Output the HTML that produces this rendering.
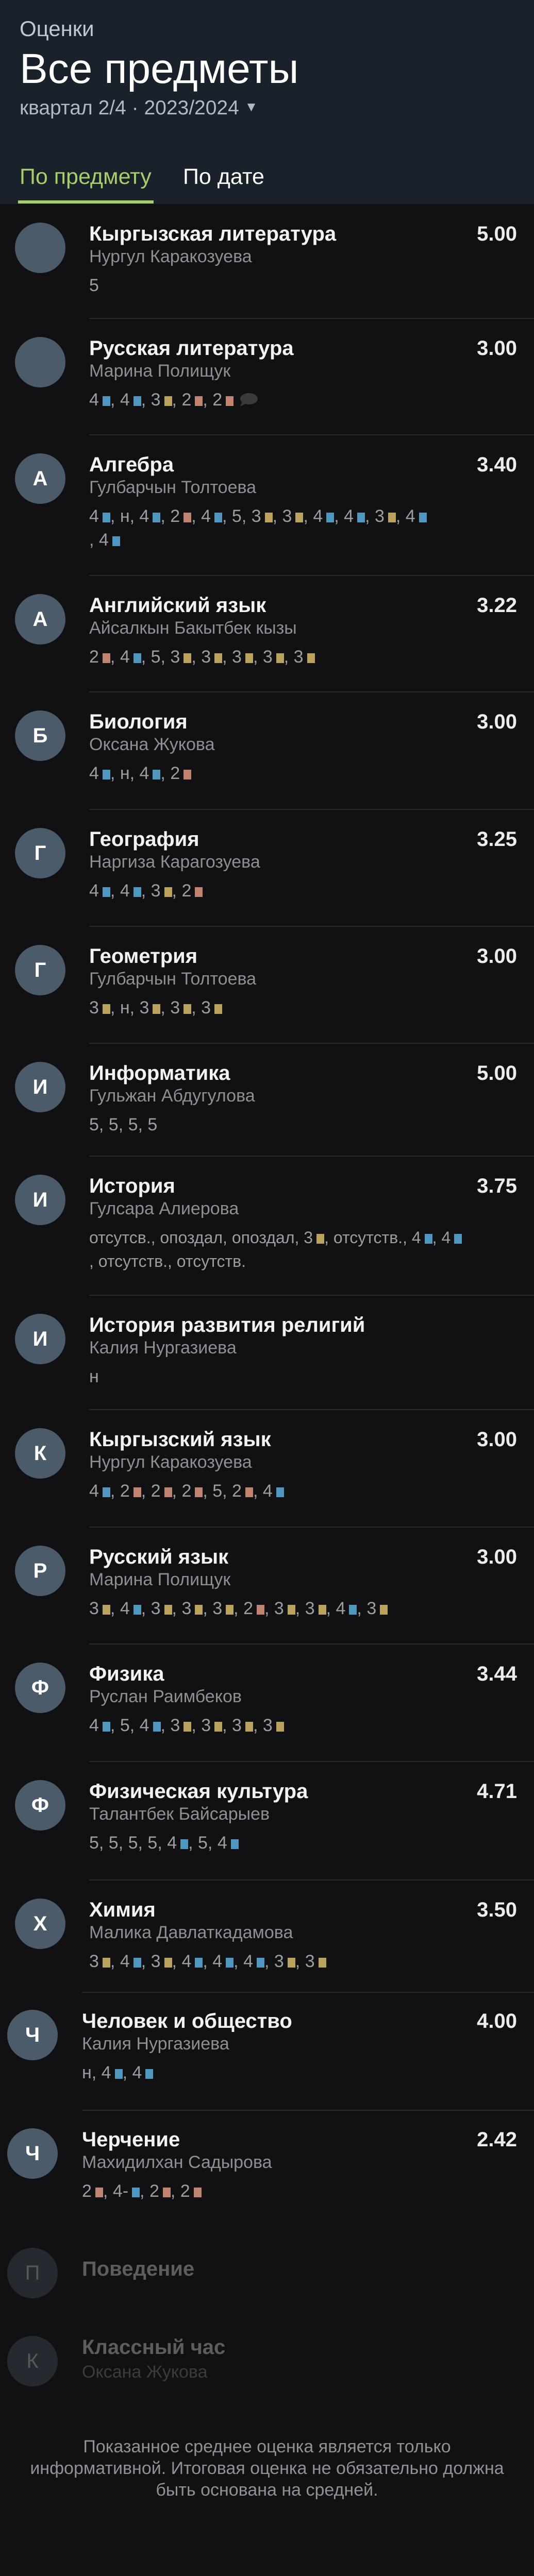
<!DOCTYPE html>
<html style="width:1036px;height:5120px;overflow:hidden"><head><meta charset="utf-8">
<style>
*{margin:0;padding:0;box-sizing:border-box}
body{width:1036px;height:5120px;background:#111113;font-family:"Liberation Sans",Arial,sans-serif;position:relative;overflow:hidden}
.hdr{position:absolute;left:0;top:0;width:1036px;height:396px;background:#19212b}
.abs{position:absolute;white-space:nowrap;line-height:1}
.row{position:absolute;left:0;width:1036px;height:0}
.av{position:absolute;width:98px;height:98px;border-radius:50%;background:#4b5b69;color:#fff;font-weight:bold;font-size:40px;text-align:center;line-height:98px}
.t{position:absolute;font-size:40px;font-weight:bold;color:#f2f2f2;line-height:1;white-space:nowrap}
.s{position:absolute;right:33px;font-size:40px;font-weight:bold;color:#ececec;line-height:1}
.tc{position:absolute;font-size:34px;color:#8c9095;line-height:1;white-space:nowrap}
.g{position:absolute;font-size:34px;color:#9a9ea3;line-height:46px;white-space:nowrap}
.g i{display:inline-block;width:15px;height:19px;margin-left:7px;vertical-align:-1px}
.b{background:#4f97bf}.y{background:#b9a25d}.r{background:#c08470}
.sep{position:absolute;right:0;height:2px;background:#29292c}
</style></head><body>
<div class="hdr"></div>
<div class="abs" style="left:38px;top:35px;font-size:42px;color:#c3c8ce">Оценки</div>
<div class="abs" style="left:38px;top:93px;font-size:82px;color:#fff">Все предметы</div>
<div class="abs" style="left:38px;top:190px;font-size:39px;color:#b3b9c1">квартал 2/4 · 2023/2024 <span style="font-size:26px;vertical-align:6px">▼</span></div>
<div class="abs" style="left:38px;top:322px;font-size:43px;color:#a6cf6b">По предмету</div>
<div class="abs" style="left:355px;top:322px;font-size:43px;color:#fff">По дате</div>
<div style="position:absolute;left:35px;top:389px;width:263px;height:6px;background:#a6cf6b"></div>

<div class="row" style="top:455px"><div class="av" style="left:29px;top:-23px"></div><div class="t" style="left:173px;top:-21px">Кыргызская литература</div><div class="s" style="top:-21px">5.00</div><div class="tc" style="left:173px;top:26px">Нургул Каракозуева</div><div class="g" style="left:173px;top:76px">5</div></div>

<div class="row" style="top:677px"><div class="sep" style="left:173px;top:-60px"></div><div class="av" style="left:29px;top:-23px"></div><div class="t" style="left:173px;top:-21px">Русская литература</div><div class="s" style="top:-21px">3.00</div><div class="tc" style="left:173px;top:26px">Марина Полищук</div><div class="g" style="left:173px;top:76px">4<i class="b"></i>, 4<i class="b"></i>, 3<i class="y"></i>, 2<i class="r"></i>, 2<i class="r"></i> <svg width="38" height="30" viewBox="0 0 38 30" style="vertical-align:-4px"><ellipse cx="20" cy="13" rx="17" ry="11" fill="#3a3a3c"/><path d="M6 20 L3 28 L14 22Z" fill="#3a3a3c"/></svg></div></div>

<div class="row" style="top:903px"><div class="sep" style="left:173px;top:-60px"></div><div class="av" style="left:29px;top:-23px">А</div><div class="t" style="left:173px;top:-21px">Алгебра</div><div class="s" style="top:-21px">3.40</div><div class="tc" style="left:173px;top:26px">Гулбарчын Толтоева</div><div class="g" style="left:173px;top:76px">4<i class="b"></i>, н, 4<i class="b"></i>, 2<i class="r"></i>, 4<i class="b"></i>, 5, 3<i class="y"></i>, 3<i class="y"></i>, 4<i class="b"></i>, 4<i class="b"></i>, 3<i class="y"></i>, 4<i class="b"></i><br>, 4<i class="b"></i></div></div>

<div class="row" style="top:1176px"><div class="sep" style="left:173px;top:-60px"></div><div class="av" style="left:29px;top:-23px">А</div><div class="t" style="left:173px;top:-21px">Английский язык</div><div class="s" style="top:-21px">3.22</div><div class="tc" style="left:173px;top:26px">Айсалкын Бакытбек кызы</div><div class="g" style="left:173px;top:76px">2<i class="r"></i>, 4<i class="b"></i>, 5, 3<i class="y"></i>, 3<i class="y"></i>, 3<i class="y"></i>, 3<i class="y"></i>, 3<i class="y"></i></div></div>

<div class="row" style="top:1402px"><div class="sep" style="left:173px;top:-60px"></div><div class="av" style="left:29px;top:-23px">Б</div><div class="t" style="left:173px;top:-21px">Биология</div><div class="s" style="top:-21px">3.00</div><div class="tc" style="left:173px;top:26px">Оксана Жукова</div><div class="g" style="left:173px;top:76px">4<i class="b"></i>, н, 4<i class="b"></i>, 2<i class="r"></i></div></div>

<div class="row" style="top:1630px"><div class="sep" style="left:173px;top:-60px"></div><div class="av" style="left:29px;top:-23px">Г</div><div class="t" style="left:173px;top:-21px">География</div><div class="s" style="top:-21px">3.25</div><div class="tc" style="left:173px;top:26px">Наргиза Карагозуева</div><div class="g" style="left:173px;top:76px">4<i class="b"></i>, 4<i class="b"></i>, 3<i class="y"></i>, 2<i class="r"></i></div></div>

<div class="row" style="top:1857px"><div class="sep" style="left:173px;top:-60px"></div><div class="av" style="left:29px;top:-23px">Г</div><div class="t" style="left:173px;top:-21px">Геометрия</div><div class="s" style="top:-21px">3.00</div><div class="tc" style="left:173px;top:26px">Гулбарчын Толтоева</div><div class="g" style="left:173px;top:76px">3<i class="y"></i>, н, 3<i class="y"></i>, 3<i class="y"></i>, 3<i class="y"></i></div></div>

<div class="row" style="top:2084px"><div class="sep" style="left:173px;top:-60px"></div><div class="av" style="left:29px;top:-23px">И</div><div class="t" style="left:173px;top:-21px">Информатика</div><div class="s" style="top:-21px">5.00</div><div class="tc" style="left:173px;top:26px">Гульжан Абдугулова</div><div class="g" style="left:173px;top:76px">5, 5, 5, 5</div></div>

<div class="row" style="top:2303px"><div class="sep" style="left:173px;top:-60px"></div><div class="av" style="left:29px;top:-23px">И</div><div class="t" style="left:173px;top:-21px">История</div><div class="s" style="top:-21px">3.75</div><div class="tc" style="left:173px;top:26px">Гулсара Алиерова</div><div class="g" style="left:173px;top:76px;font-size:32px">отсутсв., опоздал, опоздал, 3<i class="y"></i>, отсутств., 4<i class="b"></i>, 4<i class="b"></i><br>, отсутств., отсутств.</div></div>

<div class="row" style="top:2573px"><div class="sep" style="left:173px;top:-60px"></div><div class="av" style="left:29px;top:-23px">И</div><div class="t" style="left:173px;top:-21px">История развития религий</div><div class="tc" style="left:173px;top:26px">Калия Нургазиева</div><div class="g" style="left:173px;top:76px">н</div></div>

<div class="row" style="top:2795px"><div class="sep" style="left:173px;top:-60px"></div><div class="av" style="left:29px;top:-23px">К</div><div class="t" style="left:173px;top:-21px">Кыргызский язык</div><div class="s" style="top:-21px">3.00</div><div class="tc" style="left:173px;top:26px">Нургул Каракозуева</div><div class="g" style="left:173px;top:76px">4<i class="b"></i>, 2<i class="r"></i>, 2<i class="r"></i>, 2<i class="r"></i>, 5, 2<i class="r"></i>, 4<i class="b"></i></div></div>

<div class="row" style="top:3023px"><div class="sep" style="left:173px;top:-60px"></div><div class="av" style="left:29px;top:-23px">Р</div><div class="t" style="left:173px;top:-21px">Русский язык</div><div class="s" style="top:-21px">3.00</div><div class="tc" style="left:173px;top:26px">Марина Полищук</div><div class="g" style="left:173px;top:76px">3<i class="y"></i>, 4<i class="b"></i>, 3<i class="y"></i>, 3<i class="y"></i>, 3<i class="y"></i>, 2<i class="r"></i>, 3<i class="y"></i>, 3<i class="y"></i>, 4<i class="b"></i>, 3<i class="y"></i></div></div>

<div class="row" style="top:3250px"><div class="sep" style="left:173px;top:-60px"></div><div class="av" style="left:29px;top:-23px">Ф</div><div class="t" style="left:173px;top:-21px">Физика</div><div class="s" style="top:-21px">3.44</div><div class="tc" style="left:173px;top:26px">Руслан Раимбеков</div><div class="g" style="left:173px;top:76px">4<i class="b"></i>, 5, 4<i class="b"></i>, 3<i class="y"></i>, 3<i class="y"></i>, 3<i class="y"></i>, 3<i class="y"></i></div></div>

<div class="row" style="top:3478px"><div class="sep" style="left:173px;top:-60px"></div><div class="av" style="left:29px;top:-23px">Ф</div><div class="t" style="left:173px;top:-21px">Физическая культура</div><div class="s" style="top:-21px">4.71</div><div class="tc" style="left:173px;top:26px">Талантбек Байсарыев</div><div class="g" style="left:173px;top:76px">5, 5, 5, 5, 4<i class="b"></i>, 5, 4<i class="b"></i></div></div>

<div class="row" style="top:3708px"><div class="sep" style="left:173px;top:-60px"></div><div class="av" style="left:29px;top:-23px">Х</div><div class="t" style="left:173px;top:-21px">Химия</div><div class="s" style="top:-21px">3.50</div><div class="tc" style="left:173px;top:26px">Малика Давлаткадамова</div><div class="g" style="left:173px;top:76px">3<i class="y"></i>, 4<i class="b"></i>, 3<i class="y"></i>, 4<i class="b"></i>, 4<i class="b"></i>, 4<i class="b"></i>, 3<i class="y"></i>, 3<i class="y"></i></div></div>

<div class="row" style="top:3924px"><div class="sep" style="left:159px;top:-58px"></div><div class="av" style="left:14px;top:-23px">Ч</div><div class="t" style="left:159px;top:-21px">Человек и общество</div><div class="s" style="top:-21px">4.00</div><div class="tc" style="left:159px;top:26px">Калия Нургазиева</div><div class="g" style="left:159px;top:76px">н, 4<i class="b"></i>, 4<i class="b"></i></div></div>

<div class="row" style="top:4154px"><div class="sep" style="left:159px;top:-59px"></div><div class="av" style="left:14px;top:-23px">Ч</div><div class="t" style="left:159px;top:-21px">Черчение</div><div class="s" style="top:-21px">2.42</div><div class="tc" style="left:159px;top:26px">Махидилхан Садырова</div><div class="g" style="left:159px;top:76px">2<i class="r"></i>, 4-<i class="b"></i>, 2<i class="r"></i>, 2<i class="r"></i></div></div>

<div class="row" style="top:4405px"><div class="av" style="left:14px;top:-42px;background:#242a30;color:#55595d;font-weight:normal">П</div><div class="t" style="left:159px;top:-21px;color:#5b5d60">Поведение</div></div>

<div class="row" style="top:4557px"><div class="av" style="left:14px;top:-23px;background:#242a30;color:#55595d;font-weight:normal">К</div><div class="t" style="left:159px;top:-21px;color:#5b5d60">Классный час</div><div class="tc" style="left:159px;top:30px;color:#393b3e">Оксана Жукова</div></div>

<div style="position:absolute;left:0;top:4728px;width:1036px;text-align:center;font-size:34px;line-height:42px;color:#8e9297">Показанное среднее оценка является только<br>информативной. Итоговая оценка не обязательно должна<br>быть основана на средней.</div>
</body></html>
